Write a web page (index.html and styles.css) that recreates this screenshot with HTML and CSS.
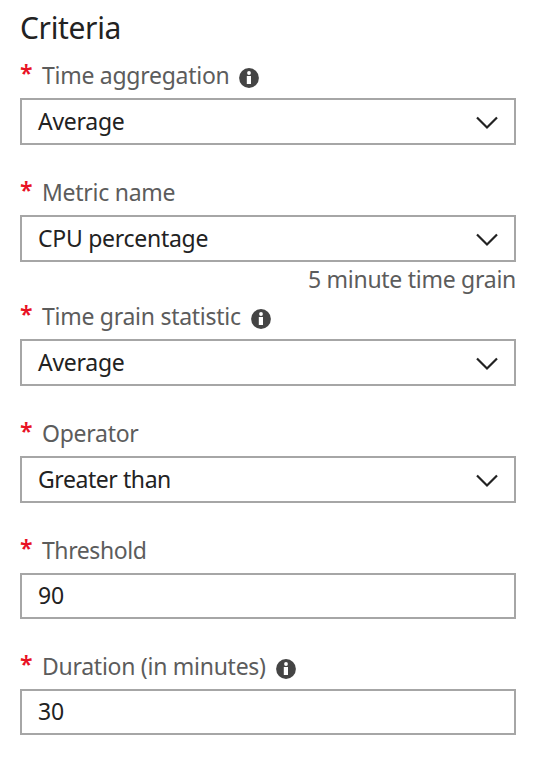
FILE: index.html
```html
<!DOCTYPE html>
<html lang="en">
<head>
<meta charset="utf-8">
<title>Criteria</title>
<link rel="stylesheet" href="styles.css">
</head>
<body>
<svg class="symbols" aria-hidden="true">
  <symbol id="info" viewBox="0 0 20 20">
    <circle cx="10" cy="10" r="9.9" fill="#444"/>
    <circle cx="10" cy="5" r="1.9" fill="#fff"/>
    <path d="M7.8 8h4.2v8H7.8z" fill="#fff"/>
  </symbol>
  <symbol id="chevron" viewBox="0 0 22 14">
    <path d="M1 1.5L11 11.5L21 1.5" fill="none" stroke="#222" stroke-width="2.2"/>
  </symbol>
</svg>
<main class="criteria">
  <h1 class="title">Criteria</h1>

  <section class="field">
    <div class="label"><span class="required">*</span><span class="name">Time aggregation</span><svg class="info"><use href="#info"/></svg></div>
    <div class="box"><span class="value">Average</span><svg class="chevron"><use href="#chevron"/></svg></div>
  </section>

  <section class="field hinted">
    <div class="label"><span class="required">*</span><span class="name">Metric name</span></div>
    <div class="box"><span class="value">CPU percentage</span><svg class="chevron"><use href="#chevron"/></svg></div>
    <div class="hint">5 minute time grain</div>
  </section>

  <section class="field">
    <div class="label"><span class="required">*</span><span class="name">Time grain statistic</span><svg class="info"><use href="#info"/></svg></div>
    <div class="box"><span class="value">Average</span><svg class="chevron"><use href="#chevron"/></svg></div>
  </section>

  <section class="field">
    <div class="label"><span class="required">*</span><span class="name">Operator</span></div>
    <div class="box"><span class="value tight">Greater than</span><svg class="chevron"><use href="#chevron"/></svg></div>
  </section>

  <section class="field">
    <div class="label"><span class="required">*</span><span class="name tight">Threshold</span></div>
    <div class="box input"><span class="value">90</span></div>
  </section>

  <section class="field">
    <div class="label"><span class="required">*</span><span class="name">Duration (in minutes)</span><svg class="info"><use href="#info"/></svg></div>
    <div class="box input"><span class="value">30</span></div>
  </section>
</main>
</body>
</html>
```
FILE: styles.css
```css
* { box-sizing: border-box; }
body {
  margin: 0;
  background: #fff;
  color: #222;
  font: 23px/26px "Noto Sans", "Open Sans", sans-serif;
  letter-spacing: -0.27px;
}
.symbols { position: absolute; width: 0; height: 0; }
.criteria { padding: 8px 27px 0 20px; }
.title {
  margin: 0;
  height: 54px;
  font-size: 30px;
  font-weight: 400;
  line-height: 39px;
  letter-spacing: -0.35px;
}
.field { margin-bottom: 34px; }
.hinted { margin-bottom: 0; }
.label { display: flex; height: 36px; color: #5c5c5c; white-space: nowrap; }
.required { width: 22px; margin-top: -2px; color: #e81123; font-weight: 600; }
.tight { letter-spacing: -0.43px; }
.info { width: 20px; height: 20px; margin: 5.7px 0 0 10px; }
.box {
  display: flex;
  justify-content: space-between;
  height: 47px;
  padding: 8px 16px 0 16px;
  border: 2px solid #a6a6a6;
  white-space: nowrap;
}
.input { height: 46px; padding-top: 7px; }
.chevron { width: 22px; height: 14px; margin-top: 7.5px; }
.hint { height: 41px; padding-top: 4px; color: #5c5c5c; text-align: right; }
```
